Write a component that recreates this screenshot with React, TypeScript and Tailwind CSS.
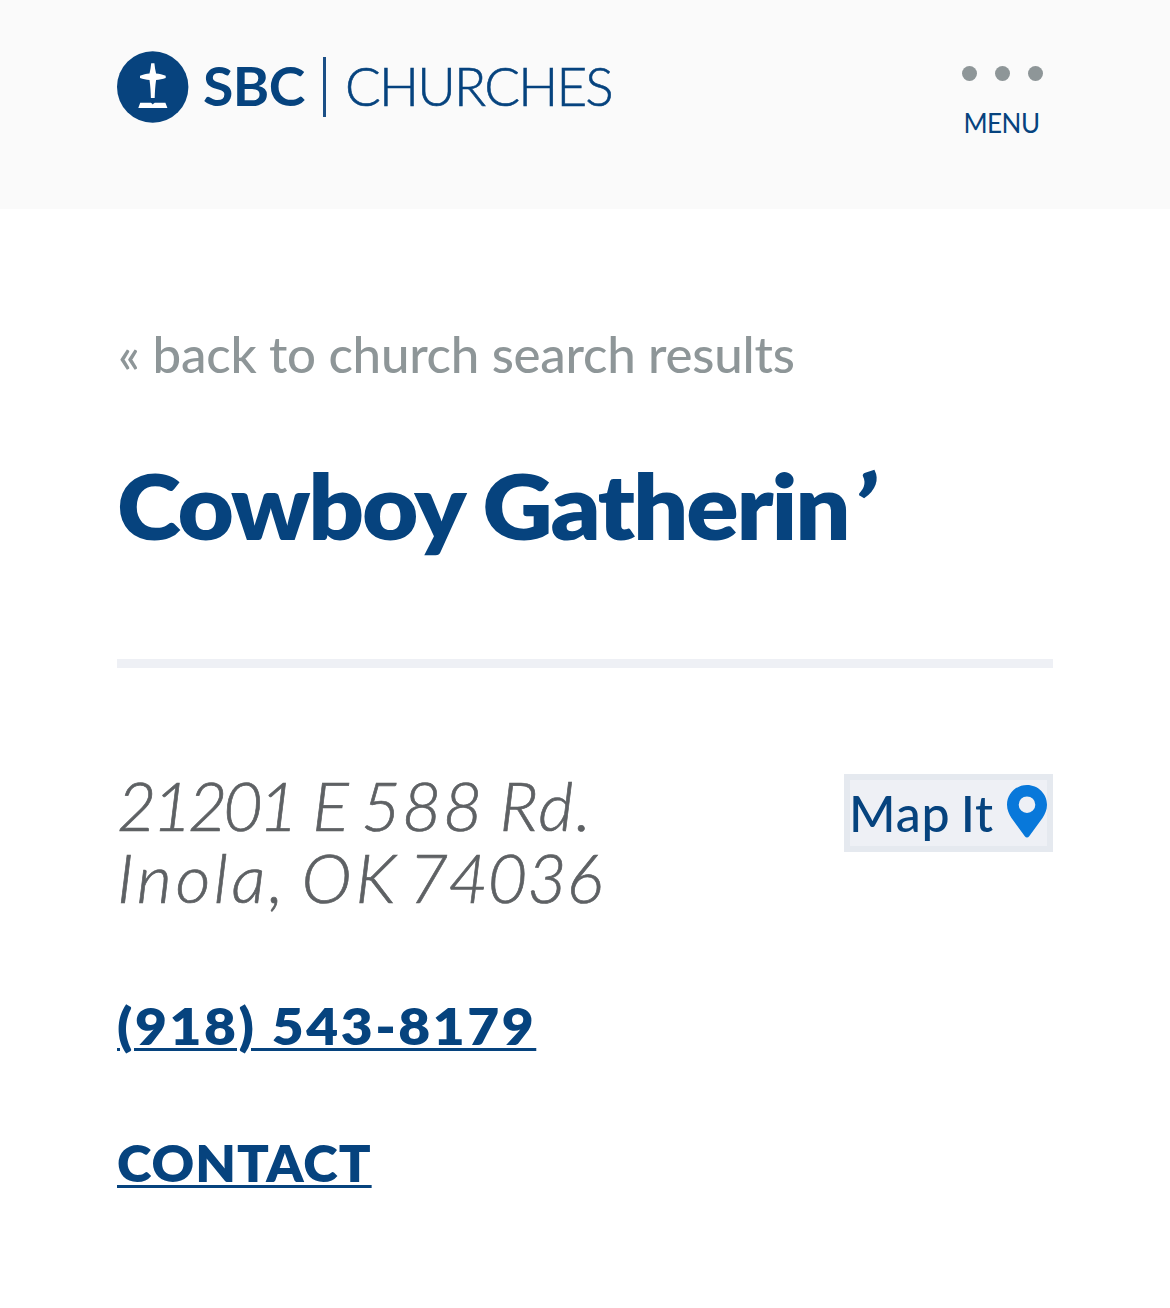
import { FC } from "react";

interface AddressWord {
  text: string;
  className: string;
}

interface ChurchInfo {
  name: string;
  address: AddressWord[][];
  phone: string;
}

const church: ChurchInfo = {
  name: "Cowboy Gatherin",
  address: [
    [
      { text: "21201", className: "tracking-[-4px]" },
      { text: "E", className: "ml-[5px] tracking-[2px]" },
      { text: "588", className: "ml-[-9px] tracking-[1.5px]" },
      { text: "Rd.", className: "ml-[-3px] tracking-[2px]" },
    ],
    [
      { text: "Inola,", className: "tracking-[3.5px]" },
      { text: "OK", className: "ml-[-6px] tracking-[4px]" },
      { text: "74036", className: "ml-[-12px]" },
    ],
  ],
  phone: "(918) 543-8179",
};

const LogoMark: FC = () => (
  <svg viewBox="0 0 72 72" className="w-[72px] h-[72px] shrink-0">
    <circle cx="35.700" cy="36" r="35.700" fill="#07437e" />
    <path
      d="M34.200 12.300h3.200c.300 3.500.900 7 1.700 10.200 3.200.300 6.600 1.200 9.600 2.200v2.200c-3 1-6.400 1.800-9.600 2.100-.900 5.800-1.200 12-1.400 18h-3.800c-.200-6-.500-12.200-1.400-18-3.200-.300-6.500-1.100-9.500-2.100v-2.200c3-1 6.300-1.900 9.500-2.200.800-3.200 1.400-6.700 1.700-10.200z"
      fill="#fff"
    />
    <path
      d="M23.200 51.700h9.800c1.200 0 2 .6 2.800 1.700.8-1.100 1.600-1.700 2.800-1.700h9.800l2 5.300H21.300z"
      fill="#fff"
    />
  </svg>
);

const MapPin: FC = () => (
  <svg viewBox="0 0 40 54" className="w-10 h-[54px] mt-[-2px] shrink-0">
    <path
      d="M20 0C9 0 0 8.800 0 19.700c0 5 2 9.400 4.500 13.300l13.300 18.200c1.200 1.600 3.200 1.600 4.400 0L35.500 33C38 29.100 40 24.700 40 19.700 40 8.800 31 0 20 0zm0 28a8.300 8.300 0 1 1 0-16.600A8.300 8.300 0 0 1 20 28z"
      fill="#0878da"
    />
  </svg>
);

const Header: FC = () => (
  <header className="flex justify-between h-[209px] pl-[117px] pr-[127px] bg-[#fafafa]">
    <a href="#" className="flex mt-[51px] h-[72px]">
      <LogoMark />
      <span className="mt-[-1px] ml-[14px] w-[107px] text-[53px] leading-[72px] font-bold tracking-[-0.5px] whitespace-nowrap origin-left scale-x-[1.045]">
        SBC
      </span>
      <span className="mt-[6px] ml-[13px] w-[3px] h-[60px] bg-[#1b4f86]" />
      <span className="mt-[-1px] ml-[19px] text-[53px] leading-[72px] font-light tracking-[-1.8px] whitespace-nowrap [-webkit-text-stroke:0.6px]">
        CHURCHES
      </span>
    </a>
    <button className="flex flex-col items-center mt-[66px] w-[81px]">
      <span className="flex justify-between w-full">
        <span className="w-[15px] h-[15px] rounded-full bg-[#8e9698]" />
        <span className="w-[15px] h-[15px] rounded-full bg-[#8e9698]" />
        <span className="w-[15px] h-[15px] rounded-full bg-[#8e9698]" />
      </span>
      <span className="mt-[25px] mr-[2px] text-[26px] leading-[34px] tracking-[-0.5px]">
        MENU
      </span>
    </button>
  </header>
);

export default function App() {
  return (
    <div className="min-h-[1308px] bg-white text-[#06437e] font-['Lato','Open_Sans',sans-serif]">
      <Header />
      <main className="flex flex-col items-start px-[117px]">
        <a
          href="#"
          className="mt-[115px] ml-[1px] text-[51px] leading-[60px] font-medium tracking-[-0.25px] text-[#8e9698] whitespace-nowrap"
        >
          « back to church search results
        </a>
        <h1 className="mt-[66px] text-[91px] leading-[110px] font-extrabold tracking-[-2px] whitespace-nowrap origin-left scale-x-[1.068]">
          {church.name}
          <span className="ml-[5px] italic">’</span>
        </h1>
        <hr className="mt-[99px] w-full h-[9px] border-0 bg-[#eef0f5]" />
        <div className="flex justify-between items-start w-full mt-[101px]">
          <address className="text-[68px] leading-[72px] font-light italic text-[#5e6164] whitespace-nowrap [-webkit-text-stroke:0.7px]">
            {church.address.map((line, index) => (
              <div key={index}>
                {line.map((word) => (
                  <span key={word.text} className={word.className}>
                    {word.text}{" "}
                  </span>
                ))}
              </div>
            ))}
          </address>
          <a
            href="#"
            className="flex items-center justify-between mt-[5px] w-[209px] h-[78px] border-6 border-[#e5e9ef] bg-[#eef0f5] text-[50px] leading-[66px] font-medium tracking-[0.8px] [word-spacing:-3px] whitespace-nowrap"
          >
            <span className="ml-[-1px]">Map It</span>
            <MapPin />
          </a>
        </div>
        <a
          href="#"
          className="mt-[81px] text-[51px] leading-[64px] font-extrabold tracking-[2.35px] underline decoration-[3px] underline-offset-[3px] whitespace-nowrap origin-left scale-x-[1.08]"
        >
          {church.phone}
        </a>
        <a
          href="#"
          className="mt-[73px] text-[51px] leading-[64px] font-extrabold tracking-[1px] underline decoration-[3px] underline-offset-[3px] origin-left scale-x-[1.028]"
        >
          CONTACT
        </a>
      </main>
    </div>
  );
}
